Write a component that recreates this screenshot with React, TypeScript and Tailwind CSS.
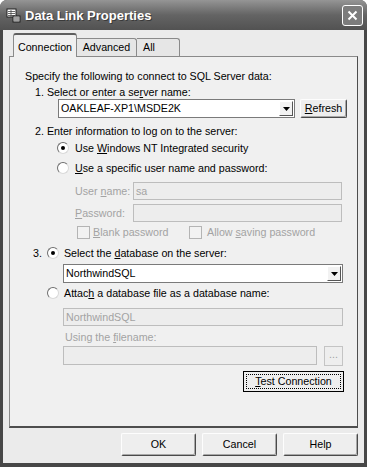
import React from "react";

const U = ({ children }: { children: React.ReactNode }) => (
  <span className="underline underline-offset-1">{children}</span>
);

const Radio = ({ checked }: { checked?: boolean }) => (
  <span className="flex w-[12px] h-[12px] shrink-0 items-center justify-center rounded-full border border-t-[#6e6e6e] border-l-[#6e6e6e] border-r-[#d8d8d8] border-b-[#d8d8d8] bg-white">
    {checked && <span className="w-[4px] h-[4px] rounded-full bg-black" />}
  </span>
);

const Check = () => (
  <span className="w-[13px] h-[13px] shrink-0 border border-[#b4b4b4] bg-[#f2f2f2]" />
);

const Arrow = () => (
  <svg width="7" height="4" viewBox="0 0 7 4">
    <path d="M0 0h7L3.5 4z" fill="#000" />
  </svg>
);

const Combo = ({ value, w }: { value: string; w: string }) => (
  <div className={`flex h-[19px] ${w} items-center border border-[#7a7a7a] bg-white`}>
    <span className="flex-1 pl-[2px] text-black">{value}</span>
    <span className="mr-[1px] flex h-[15px] w-[14px] items-center justify-center border border-t-white border-l-white border-r-[#555] border-b-[#555] bg-[#f2f2f2]">
      <Arrow />
    </span>
  </div>
);

const Btn = ({ children, w, h = "h-[23px]" }: { children: React.ReactNode; w: string; h?: string }) => (
  <div
    className={`flex ${w} ${h} items-center justify-center rounded-[2px] border border-t-[#fdfdfd] border-l-[#fdfdfd] border-r-[#4a4a4a] border-b-[#4a4a4a] bg-[#eeeeee] shadow-[inset_-1px_-1px_0_#a8a8a8] text-black`}
  >
    <span>{children}</span>
  </div>
);

const Field = ({ w, value, h = "h-[18px]" }: { w: string; value?: string; h?: string }) => (
  <div className={`flex ${w} ${h} items-center border border-[#bdbdbd] bg-[#ededed] pl-[2px] text-[#a3a3a3]`}>
    {value}
  </div>
);

export default function App() {
  return (
    <div className="w-[367px] h-[467px] bg-[#474747] rounded-t-[7px] overflow-hidden flex flex-col font-['Liberation_Sans',Arial,sans-serif] text-[10.7px] leading-none text-black">
      {/* title bar */}
      <div className="h-[30px] shrink-0 flex items-center bg-linear-to-b from-[#959595] via-[#646464] to-[#525252] pl-[6px] pr-[4px]">
        <svg width="15" height="15" viewBox="0 0 15 15" className="shrink-0">
          <rect x="1" y="1" width="9" height="8" fill="#fff" stroke="#222" />
          <path d="M2 3.5h7M2 5.5h7M2 7.5h7M5 2v7" stroke="#444" strokeWidth="0.8" />
          <rect x="7" y="8" width="7" height="6" fill="#d0d0d0" stroke="#222" />
          <path d="M8 10h5M8 12h5" stroke="#555" strokeWidth="0.8" />
        </svg>
        <span className="ml-[4px] text-[13px] font-bold text-white [text-shadow:1px_1px_0_#3a3a3a]">
          Data Link Properties
        </span>
        <div className="ml-auto w-[21px] h-[21px] rounded-[3px] border border-white bg-[#7c7c7c] flex items-center justify-center">
          <svg width="11" height="11" viewBox="0 0 11 11">
            <path d="M1.5 1.5l8 8M9.5 1.5l-8 8" stroke="#fff" strokeWidth="2" />
          </svg>
        </div>
      </div>

      {/* body */}
      <div className="flex-1 mx-[3px] mb-[4px] bg-[#ebebeb] flex flex-col pt-[3px]">
        {/* tabs */}
        <div className="flex items-end h-[23px] pl-[10px]">
          <div className="relative z-10 -mb-[1px] w-[64px] h-[24px] flex justify-center pt-[7px] border border-b-0 border-[#8a8a8a] border-t-[#5e5e5e] border-t-2 rounded-t-[3px] bg-[#f0f0f0]">
            Connection
          </div>
          <div className="w-[60px] h-[18px] flex items-center justify-center border border-b-0 border-l-0 border-[#8a8a8a] rounded-tr-[3px] bg-[#e6e6e6]">
            Advanced
          </div>
          <div className="w-[43px] h-[18px] flex items-center pl-[6px] border border-b-0 border-l-0 border-[#8a8a8a] rounded-tr-[3px] bg-[#e6e6e6]">
            All
          </div>
        </div>

        {/* panel */}
        <div className="ml-[6px] w-[349px] h-[372px] border border-t-[#8a8a8a] border-l-[#8a8a8a] border-r-[#4e4e4e] border-b-[#4e4e4e] border-b-2 bg-[#f0f0f0] flex flex-col">
          <div className="mt-[12px] ml-[15px] h-[14px] flex items-center">
            <span>Specify the following to connect to SQL Server data:</span>
          </div>
          <div className="mt-[3px] ml-[25px] h-[13px] flex items-center">
            <span>
              1. Select or enter a se<U>r</U>ver name:
            </span>
          </div>
          <div className="ml-[48px] h-[19px] flex items-center gap-[5px]">
            <Combo value="OAKLEAF-XP1\MSDE2K" w="w-[237px]" />
            <Btn w="w-[47px]" h="h-[19px]">
              <U>R</U>efresh
            </Btn>
          </div>
          <div className="mt-[6px] ml-[25px] h-[14px] flex items-center">
            <span>2. Enter information to log on to the server:</span>
          </div>
          <div className="mt-[3px] ml-[47px] h-[14px] flex items-center gap-[6px]">
            <Radio checked />
            <span>
              Use <U>W</U>indows NT Integrated security
            </span>
          </div>
          <div className="mt-[6px] ml-[47px] h-[14px] flex items-center gap-[6px]">
            <Radio />
            <span>
              <U>U</U>se a specific user name and password:
            </span>
          </div>
          <div className="mt-[7px] ml-[65px] h-[18px] flex items-center text-[#a3a3a3]">
            <span className="w-[58px]">
              User <U>n</U>ame:
            </span>
            <Field w="w-[209px]" value="sa" />
          </div>
          <div className="mt-[4px] ml-[65px] h-[18px] flex items-center text-[#a3a3a3]">
            <span className="w-[58px]">
              <U>P</U>assword:
            </span>
            <Field w="w-[209px]" />
          </div>
          <div className="mt-[3px] ml-[67px] h-[14px] flex items-center text-[#a3a3a3]">
            <span className="w-[112px] flex items-center gap-[3px]">
              <Check />
              <span>
                <U>B</U>lank password
              </span>
            </span>
            <span className="flex items-center gap-[5px]">
              <Check />
              <span>
                Allow <U>s</U>aving password
              </span>
            </span>
          </div>
          <div className="mt-[7px] ml-[23px] h-[14px] flex items-center gap-[5px]">
            <span>3.</span>
            <Radio checked />
            <span>
              Select the <U>d</U>atabase on the server:
            </span>
          </div>
          <div className="mt-[4px] ml-[53px]">
            <Combo value="NorthwindSQL" w="w-[280px]" />
          </div>
          <div className="mt-[3px] ml-[37px] h-[14px] flex items-center gap-[5px]">
            <Radio />
            <span>
              Attac<U>h</U> a database file as a database name:
            </span>
          </div>
          <div className="mt-[8px] ml-[53px]">
            <Field w="w-[280px]" value="NorthwindSQL" />
          </div>
          <div className="mt-[5px] ml-[55px] h-[12px] flex items-center text-[#a3a3a3]">
            <span>
              Using the <U>f</U>ilename:
            </span>
          </div>
          <div className="mt-[3px] ml-[53px] h-[19px] flex items-center gap-[7px]">
            <Field w="w-[254px]" h="h-[19px]" />
            <div className="w-[19px] h-[20px] flex items-center justify-center border border-[#c4c4c4] bg-[#eeeeee] text-[#a3a3a3] pb-[3px]">
              ...
            </div>
          </div>
          <div className="mt-[6px] ml-[233px] w-[101px] h-[21px] border border-black bg-[#eeeeee] p-[2px]">
            <div className="w-full h-full border border-dotted border-black flex items-center justify-center">
              <span>
                <U>T</U>est Connection
              </span>
            </div>
          </div>
        </div>

        {/* bottom buttons */}
        <div className="mt-[5px] flex justify-end gap-[6px] pr-[6px]">
          <Btn w="w-[75px]">OK</Btn>
          <Btn w="w-[75px]">Cancel</Btn>
          <Btn w="w-[75px]">Help</Btn>
        </div>
      </div>
    </div>
  );
}
